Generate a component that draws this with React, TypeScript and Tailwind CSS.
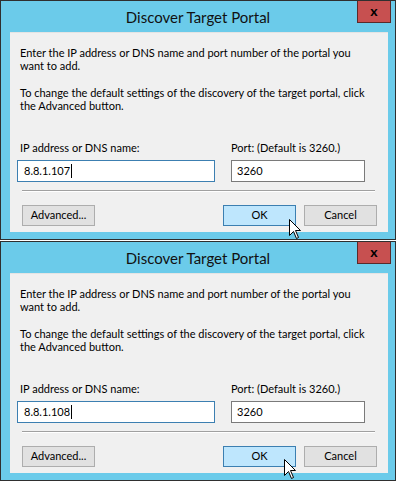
import React from "react";

const font = { fontFamily: 'Lato, "Noto Sans", sans-serif' };

function Cursor({ x, y }: { x: number; y: number }) {
  return (
    <svg
      className="absolute z-10"
      style={{ left: x, top: y }}
      width="13"
      height="21"
      viewBox="0 0 13 21"
    >
      <path
        d="M0.5 0.5 L0.5 16.5 L4.5 12.5 L7.5 19.5 L9.5 18.5 L6.5 11.5 L11.5 11.5 Z"
        fill="#fff"
        stroke="#000"
        strokeWidth="1"
        strokeLinejoin="miter"
      />
    </svg>
  );
}

function Dialog({ ip, cursor }: { ip: string; cursor: { x: number; y: number } }) {
  return (
    <div className="relative w-[396px] h-[240px] border border-[#2f2f2f] bg-[#6bcbea] flex flex-col">
      {/* title bar */}
      <div className="relative h-[31px] shrink-0 flex items-center justify-center">
        <span className="text-[15px] text-[#111] leading-none mt-[2px]">Discover Target Portal</span>
        <div className="absolute right-[4px] top-0 w-[34px] h-[22px] bg-[#c75050] border border-[#5a2a2a] border-t-0 flex items-center justify-center">
          <span className="text-[14px] font-bold leading-none text-black mb-[2px]">x</span>
        </div>
      </div>

      {/* client area */}
      <div className="ml-[9px] w-[378px] h-[200px] shrink-0 bg-[#f0f0f0] border-t border-[#e4e4e4] text-[11px] text-black whitespace-nowrap">
        <div className="pl-[10px] pt-[13px] leading-[13px]">
          <p>
            Enter the IP address or DNS name and port number of the portal you
            <br />
            want to add.
          </p>
          <p className="mt-[14px]">
            To change the default settings of the discovery of the target portal, click
            <br />
            the Advanced button.
          </p>
        </div>

        <div className="flex mt-[28px]">
          <div className="ml-[7px] w-[198px] flex flex-col">
            <span className="pl-[3px] leading-[15px] mb-[5px]">IP address or DNS name:</span>
            <div className="h-[22px] border border-[#3c7fb1] bg-white flex items-center pl-[6px]">
              <span>{ip}</span>
              <span className="ml-[1px] w-[1px] h-[14px] bg-black" />
            </div>
          </div>
          <div className="ml-[16px] w-[134px] flex flex-col">
            <span className="leading-[15px] mb-[5px]">Port: (Default is 3260.)</span>
            <div className="h-[22px] border border-[#7a7a7a] bg-white flex items-center pl-[5px]">
              <span>3260</span>
            </div>
          </div>
        </div>

        <div className="ml-[12px] mr-[13px] mt-[8px] h-[2px] border-t border-[#a0a0a0] border-b border-b-white" />

        <div className="flex mt-[13px] pl-[12px] pr-[11px]">
          <div className="w-[73px] h-[21px] border border-[#adadad] bg-[#e1e1e1] flex items-center justify-center">
            Advanced...
          </div>
          <div className="flex-1" />
          <div className="w-[73px] h-[21px] border border-[#3c7fb1] bg-[#bee6fd] flex items-center justify-center">
            OK
          </div>
          <div className="ml-[8px] w-[73px] h-[21px] border border-[#adadad] bg-[#e1e1e1] flex items-center justify-center">
            Cancel
          </div>
        </div>
      </div>

      <Cursor x={cursor.x} y={cursor.y} />
    </div>
  );
}

export default function App() {
  return (
    <div className="w-[398px] h-[483px] bg-white flex flex-col gap-[1px]" style={font}>
      <Dialog ip="8.8.1.107" cursor={{ x: 288, y: 218 }} />
      <Dialog ip="8.8.1.108" cursor={{ x: 283, y: 217 }} />
    </div>
  );
}
